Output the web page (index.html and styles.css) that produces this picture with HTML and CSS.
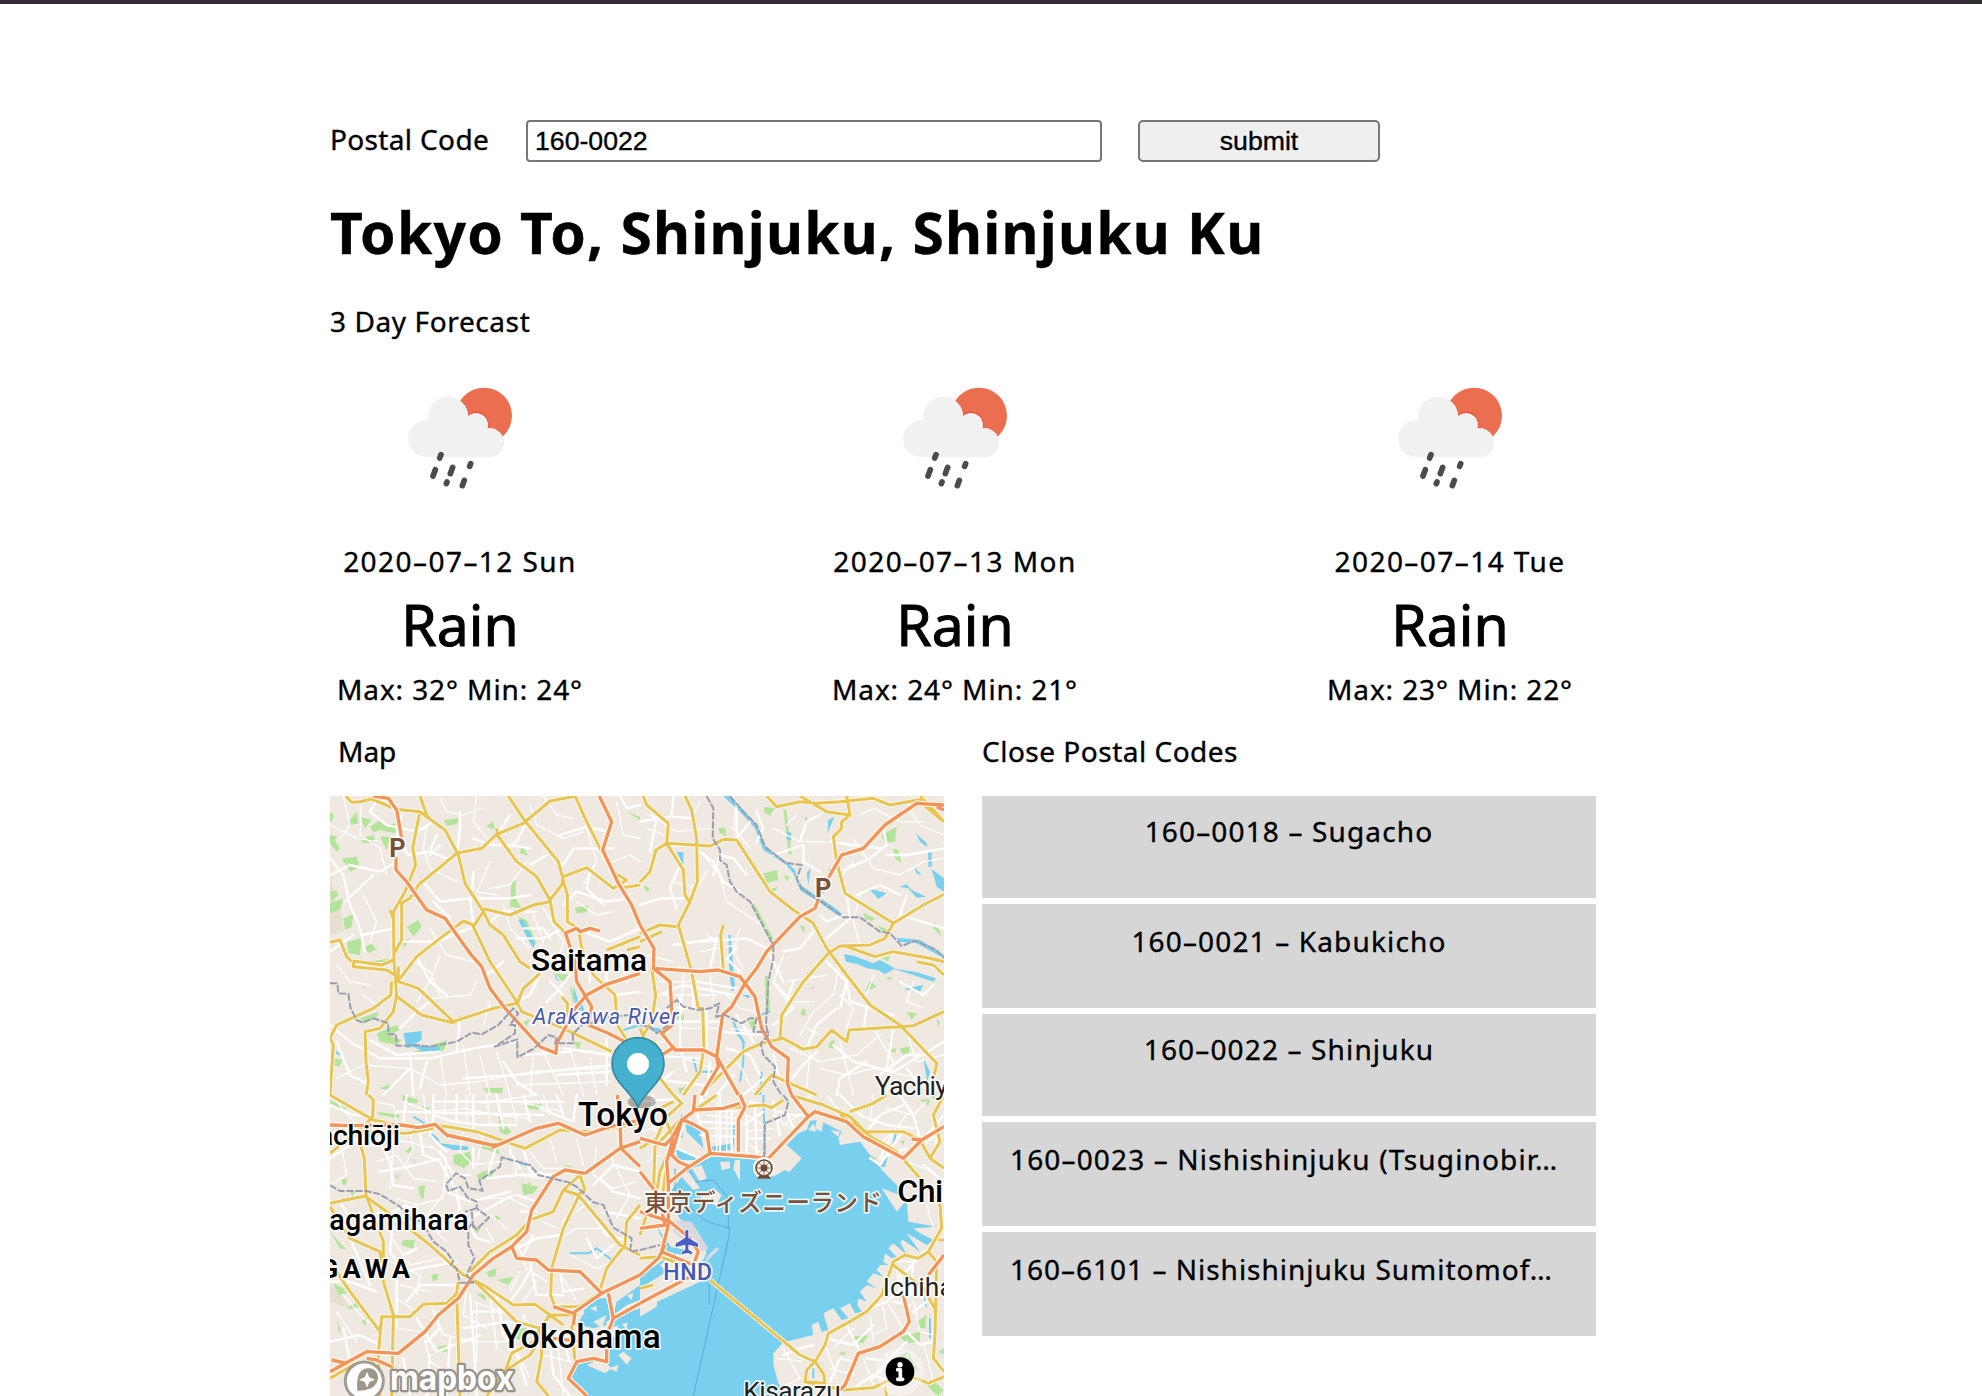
FILE: index.html
```html
<!DOCTYPE html>
<html lang="en">
<head>
<meta charset="utf-8">
<title>Postal Code Weather</title>
<link rel="stylesheet" href="styles.css">
</head>
<body>
<svg class="sprite" aria-hidden="true">
  <symbol id="rain" viewBox="261 51 318 306">
    <circle cx="492" cy="137" r="84" fill="#eb6e50"/>
    <g fill="#f04e30"><path d="M424 92Q446 112 446 140L436 150Z"/><circle cx="468" cy="163" r="38"/><path d="M470 190Q505 160 549 200Z"/></g>
    <g fill="#f1f1f1"><circle cx="385" cy="140" r="60"/><circle cx="319" cy="206" r="55"/><circle cx="468" cy="165" r="36"/><circle cx="508" cy="218" r="44"/><path d="M319 150H400L470 160L508 200V262H319Z"/></g>
    <path d="M363 254l-4 10M346 299l-7 19M398 292l-7 19M452 281l-3 8M381 336l-2 5M433 331l-6 16" stroke="#4b4b4b" stroke-width="17" stroke-linecap="round"/>
  </symbol>
</svg>
<main class="page">
  <form class="search">
    <label class="search-label" for="code">Postal Code</label>
    <input class="search-input" id="code" type="text" value="160-0022">
    <button class="search-button" type="button">submit</button>
  </form>
  <h1 class="place">Tokyo To, Shinjuku, Shinjuku Ku</h1>
  <p class="subtitle">3 Day Forecast</p>
  <section class="forecast">
    <article class="day">
      <svg class="day-icon"><use href="#rain"/></svg>
      <p class="day-date">2020–07–12 Sun</p>
      <p class="day-state">Rain</p>
      <p class="day-temp">Max: 32° Min: 24°</p>
    </article>
    <article class="day">
      <svg class="day-icon"><use href="#rain"/></svg>
      <p class="day-date">2020–07–13 Mon</p>
      <p class="day-state">Rain</p>
      <p class="day-temp">Max: 24° Min: 21°</p>
    </article>
    <article class="day">
      <svg class="day-icon"><use href="#rain"/></svg>
      <p class="day-date">2020–07–14 Tue</p>
      <p class="day-state">Rain</p>
      <p class="day-temp">Max: 23° Min: 22°</p>
    </article>
  </section>
  <div class="columns">
    <section>
      <h2 class="heading heading-map">Map</h2>
      <svg class="map" viewBox="0 3 1842 1800" preserveAspectRatio="none">
        <defs>
          <g id="trunk">
            <!-- north-west -->
            <path d="M48 3L65 22L90 20L125 12L200 43L270 50L345 105L385 180L405 265L460 350L480 390L520 420L570 500L600 520M270 3L290 60L302 75M268 58L248 160L257 210L225 290L190 350L192 500L200 600L190 650L150 700L105 710L108 800L115 860L108 900M180 345L192 375M535 3L585 78L685 200L697 245L712 300L712 380L745 400L755 460L790 540L855 600L862 690L890 735M240 310L265 270L380 175L455 160L500 118L580 85L660 18L740 3M500 100L502 120L560 200L620 245L660 315L672 380L705 412M660 315L695 270L700 245L770 218L850 280L890 255L845 230L770 80L735 3M660 320L610 330L540 360L465 342L430 395L480 500L560 620L575 650L700 700L845 770M430 390L400 378L330 430L260 485L210 550L170 525L70 515L72 498L155 510L190 495M0 442L30 435L50 485L65 500M185 560L182 600L130 640L20 690L0 730M205 515L205 560L265 580L370 680L490 640L562 625L580 580L630 535M195 600L275 660L375 685M240 310L215 325L215 435L190 480M0 730L10 750L0 900M830 465L930 425M890 465L930 455M870 280L930 270M695 605L712 625L715 690"/>
            <!-- north-east -->
            <g transform="translate(930 0)">
              <path d="M10 3L20 30L85 85L80 145L48 165L30 230L0 262M135 3L155 45L170 130L172 260L150 320L115 390L155 530L175 640L188 640L192 760L180 830L130 900M80 145L210 153L250 133L290 135L390 290L460 345L520 385L560 460L620 540L690 630L780 690L890 805L870 900M80 145L130 225L135 300L150 325M0 415L60 390L110 395M0 440L65 410M250 390L242 420L250 525M35 520L47 600L35 680L10 720M380 3L410 35L480 20L530 25L600 20L700 10L750 30L850 12M480 3L560 50L630 60L620 3M625 65L605 80L605 100L580 125L590 200L615 295L760 385L735 430L690 450L600 453L565 475L490 560L425 660L420 730M760 385L850 330L912 298M620 455L705 485L760 470L870 490L912 500M830 500L880 510L912 540M365 745L430 730L490 763L530 755L575 705L620 740L628 705L820 692L912 650M365 745L310 770L180 900M0 700L60 850L100 900M345 900L395 840L450 865L530 900M850 12L912 80M40 740L70 780M845 3V25L905 75"/>
            </g>
            <!-- south-west -->
            <g transform="translate(0 900)">
              <path d="M115 0L130 15L128 65L100 95L80 105L103 190L108 300L160 440L160 560L190 660L185 903M0 0L130 75L230 95L340 93L440 110L585 160L690 105L790 110L930 85M0 175L80 110L230 115L310 100M0 325L105 303L205 375L300 450L400 540L460 570L550 630L615 628L660 660L700 690M0 335L60 430L150 470L160 540M420 530L480 470L560 420L600 375L670 350L700 285L750 240L765 285L750 295L700 400L665 520L662 600L675 635L745 635L820 585M700 285L745 300L870 450L930 480M0 500L60 590L150 710L155 665L240 665L280 628L350 625L380 595L385 560M155 665L145 780L150 903M380 600L390 903M430 555L560 680L630 700L610 740L545 775L525 830L470 903M660 660L630 700L635 780L620 860L655 903M0 850L70 810L140 800M725 690L735 800M930 330L890 380L885 450L830 520L810 585M520 830L600 780L625 740M660 660L745 660"/>
            </g>
            <!-- south-east -->
            <g transform="translate(930 900)">
              <path d="M0 160L50 130L75 70L125 25L100 0M120 75L45 155L40 300L0 420M150 50L310 35L370 30L395 38L430 15M165 45L230 0M30 55L100 20M75 70L100 130L80 210L62 340M0 490L60 485L130 510M90 160L60 230L50 290M450 0L550 30L630 65L675 110L790 110L840 135L870 190L912 220M630 50L700 25L740 0M870 190L900 140L880 60L912 0M600 60L700 130L770 170L840 250L900 330L905 400L865 470L835 490L795 480L760 500L725 600L680 650L620 685L565 715L555 750L525 800M210 555L480 780L525 800L550 835L555 865L495 860L500 825L525 800M495 860L540 870L610 885L700 878L760 850L830 850L865 865L912 845M760 510L850 580L890 650M865 470L890 500L885 720L880 790L912 830M895 435H912M740 903L735 875M0 580L40 570"/>
            </g>
          </g>
          <g id="motorway">
            <path d="M130 3L175 10L200 45L215 130M198 185V225L230 260L290 345L345 370L370 405L420 475L455 515L480 580L525 640L630 755L678 775L680 745L710 690L735 640L770 600L830 568L930 535M705 415L740 400L750 410L780 400L810 408M705 410L735 500L740 560L785 635L775 690L835 715L885 740M808 3L845 80L818 165L865 265L905 330L930 390"/>
            <g transform="translate(930 0)">
              <path d="M0 390L42 460L40 520L180 530L235 525L300 545L315 565L345 605L365 700L395 755L445 790L442 865L455 900M40 520L90 560L98 690L65 715L105 765L190 765L230 785L295 900M105 755L65 780M315 565L350 520L380 470L480 365L525 340L540 300L570 240L605 180L670 160L735 90L830 25L912 30M315 565L275 635L248 660L230 785L235 815L185 900M890 35L912 45"/>
            </g>
            <g transform="translate(0 900)">
              <path d="M0 90L60 92L215 90L265 98L315 88L350 120L485 150L505 150L620 100L685 85L765 120L840 95L930 75M485 158L505 150M765 235L705 225L670 245L605 345L590 410L545 455L490 490L430 540L385 610L325 660L285 710L205 775L110 770L0 830M765 235L870 160L930 140M862 0L870 80L873 160L930 215M545 455L560 490L620 495L655 525L750 530L815 595L930 540M815 595L735 650L730 690M835 595L850 670L930 625M850 670L830 720L830 800L790 790L740 800L715 850L770 903M5 795L50 805M670 635L730 655M668 730L760 740M110 790L140 795L185 815"/>
            </g>
            <g transform="translate(930 900)">
              <path d="M165 0L160 50L125 75L95 130L75 150L0 130M300 0L315 35L295 75V170M300 25L250 40L160 45M130 75L155 85L200 110L210 175M125 75L95 180L115 200L150 215M455 0L505 65L385 190L340 185L210 175L140 220L85 265L80 200L100 130M505 65L525 50L620 80L670 125L790 190L845 135L912 95M815 132L845 135M85 265L85 390L65 470L160 510L175 470L150 430L90 380L0 350M0 400L75 390L55 300L0 230M0 540L55 490L75 450M0 625L160 540M912 480L865 540M790 600L808 680L790 710L720 755L655 775L615 870L600 885"/>
            </g>
          </g>
        </defs>
        <rect width="1842" height="1810" fill="#f0e9e1"/>
        <g fill="#e5dfd2"><path d="M0 220L15 320L35 360L40 410L0 420ZM0 1470L35 1500L60 1540L0 1520ZM300 300L325 290L320 302ZM90 580L105 572L108 585ZM1435 580L1455 570L1450 588ZM190 1140L215 1133L205 1160ZM240 1090L265 1095L250 1108Z"/></g>
        <g fill="#b4e39c">
          <path d="M60 75L80 50L85 85L60 90ZM90 65L125 75L105 100ZM120 95L150 75L160 90L200 85L195 115L150 105L130 112ZM150 125L180 125L170 165ZM35 190L80 185L90 215L60 230ZM0 120L20 125L15 135L30 160L20 170L0 145ZM90 130L130 120L135 142L100 145ZM340 75L385 70L380 88L350 92ZM470 95L490 78L495 105ZM575 150L595 182L570 175ZM545 255H557V310L575 340L540 335ZM230 395L265 375L275 395L250 425ZM215 445L240 430L225 455ZM50 440L95 430L90 480L55 475ZM105 455L125 447L140 462L115 475ZM0 290L20 285L25 300L5 320ZM0 325L40 310L30 345L0 355ZM40 370L70 358L65 395L45 405ZM735 340L775 330L770 352L740 355ZM565 365L590 375L620 445L605 450ZM670 535L720 540L700 560ZM720 570L735 600L730 630ZM730 740L755 742L745 765ZM580 680L600 672L590 695ZM90 670L145 650L140 670L100 685ZM140 715L200 690L210 705L175 720L215 735L200 750L150 740ZM250 770L350 735L345 760L330 775ZM12 790L38 795L28 815L10 810ZM150 880L180 868L175 885ZM460 880L520 878L515 895L470 892ZM890 50L930 65V75ZM120 500L180 490L165 512ZM385 665L412 658L405 668ZM660 828L690 822L680 832ZM0 50L12 60L5 80L0 78Z"/>
          <path transform="translate(930 0)" d="M235 100L255 98L260 125L240 115ZM370 35L405 40L390 62L375 55ZM430 40L440 50L455 180L445 175ZM495 65L510 75L495 90ZM725 120L770 95L765 140L735 145ZM760 160L775 165L785 205L765 190ZM335 190L355 220L345 225ZM370 235L410 225L415 255L380 265ZM380 285L415 275L400 292ZM430 240L450 245L440 258ZM480 285L520 300L530 315L500 300ZM670 355L705 370L695 378L675 372ZM710 390L745 405L730 412ZM480 390L495 395L490 415ZM885 380L900 410L905 425L880 400ZM330 320L345 330L400 430L390 440ZM375 540L385 545L390 650L378 660ZM725 490L750 482L745 500ZM675 590L690 555L710 575ZM735 548L758 545L750 555ZM485 645L495 640L498 662L482 660ZM570 740L585 735L580 762L565 755ZM800 650L830 655L815 675ZM745 735L760 730L755 748ZM745 765L770 760L765 775ZM780 760L810 755L805 780L785 775ZM110 660L132 658L130 685L112 683ZM325 680L350 670L340 710ZM115 880L135 875L120 898ZM890 670L900 680L895 700ZM10 270L30 280L20 292Z"/>
          <path transform="translate(0 900)" d="M215 0L265 15L260 25L220 20ZM505 60L525 90L545 110L530 120L510 112ZM580 30L635 28L630 45L590 40ZM140 50L210 60L205 70L150 60ZM225 170L250 150L240 175ZM265 275L285 270L280 315L268 300ZM370 180L420 170L425 200L400 220L370 205ZM440 155L500 150L510 180L490 170ZM440 240L470 225L495 225L480 250L445 255ZM575 265L625 275L610 295L580 300ZM590 268L600 262L605 275ZM495 360L512 368L500 382ZM430 400L455 400L440 415ZM220 435L255 435L250 462L215 450ZM470 530L500 520L495 545L475 545ZM500 555L550 545L535 570ZM305 540L325 535L322 555L308 558ZM440 595L465 600L465 618ZM50 640L85 618L95 635L60 642ZM20 670L35 720L25 705ZM95 680L110 665L108 695ZM325 755L350 750L352 770L322 770ZM0 410L50 465L30 460ZM550 705L600 695L570 735L555 730ZM780 330L795 335L800 340ZM10 565L40 580L50 595L25 600ZM60 290L75 290L68 305ZM0 15L50 40L40 45L0 25ZM270 32L300 38L295 45ZM700 210L725 212L720 218ZM35 255L52 250L48 270L38 268Z"/>
          <path transform="translate(930 900)" d="M780 140L795 135L790 150ZM840 15L870 12L865 32ZM690 180L710 190L700 205ZM830 680L860 660L855 700L835 698ZM780 725L840 710L840 740L800 745ZM640 725L685 720L670 745L645 740ZM595 775L620 768L610 782ZM860 870L885 860L910 885L895 903L880 890ZM800 770L840 830L770 790ZM870 5L890 0V15ZM895 770L912 760V780Z"/>
        </g>
        <!-- bay, harbours, lakes -->
        <g fill="#78cfee">
          <path transform="translate(930 900)" d="M-155 903L-210 860L-195 800L-150 790L-105 800L-95 760L-85 740L-60 680L-40 705L-35 660L0 665L50 635L52 620L180 560L205 545L195 505L165 510L235 465L232 455L190 495L200 470L160 400L120 372L100 335L95 285L140 225L215 185L290 182L350 195L400 245L435 225L448 232L485 190L440 150L475 115L500 105L510 78L530 75L525 100L545 110L550 82L605 110L595 130L600 150L660 140L690 180L730 230L770 270L800 310L805 380L890 395L820 400L840 415L880 435L860 450L800 415L840 470L790 435L780 440L800 480L760 445L745 460L770 485L755 490L735 475L730 500L745 510L720 510L710 525L730 545L700 535L680 560L710 580L680 570L660 590L680 620L655 610L652 630L665 650L645 655L630 625L600 640L625 670L605 675L580 640L550 655L565 705L545 710L535 680L515 690L520 720L430 742L400 775V810L415 865L440 903Z"/>
          <path d="M740 1590L790 1510L835 1510L850 1570L790 1600L750 1590ZM850 1560L860 1520L930 1470V1515L890 1530ZM835 1600L870 1590L930 1570V1540L850 1565ZM760 1545L815 1520L830 1590L790 1600Z"/>
          <path d="M220 715L275 708V735L250 750L330 755V772L280 770L250 755L230 760ZM565 375L580 375L615 445L610 460L595 435ZM730 570L745 620L735 625ZM670 535L690 560L680 555ZM15 765L38 782L20 778ZM300 1010L325 1030L330 1045L375 1050L415 1055V1065H370L325 1048L305 1030ZM515 1085L600 1108L595 1115L520 1090ZM610 1120L640 1142L625 1143ZM755 625L765 650L745 645Z"/>
          <path transform="translate(930 0)" d="M250 3H270L310 45L350 90L375 155L440 200L465 225L475 265L525 300L580 335L610 360L600 365L535 320L480 285L460 235L435 205L370 165L345 100L300 50ZM440 112H453V138L440 130ZM500 235L512 218L505 270ZM828 115L860 145V155L840 140ZM865 170L875 175V215H865ZM875 222L912 250V290L890 275ZM685 280L740 295L715 312ZM778 275L800 268L815 285L858 305L830 308L805 280ZM825 218L845 240L828 235ZM612 478L640 482L700 505L720 495L765 520L735 538L715 525L680 520L655 508L618 500ZM755 520L830 532L888 550L880 560L820 540ZM790 582L850 570L840 590ZM770 428L840 435L912 480V490L830 445L775 440ZM110 170L130 172V210ZM565 75L583 65L562 115ZM265 420H272L285 580L275 590L268 530ZM305 600L330 600L325 610ZM850 790L870 830L862 860ZM280 680L320 750L290 720ZM10 695L60 700L55 715Z"/>
          <path transform="translate(930 900)" d="M105 155L200 195L115 195ZM135 80L180 95L190 160L140 110ZM215 155L280 145V165L220 170ZM270 90L285 92L282 150L275 145ZM50 395L110 480L80 460ZM0 530L60 510L80 530L0 580ZM720 215L745 180L735 215ZM60 450L140 465L130 480L70 468ZM850 580L862 640L855 630Z"/>
        </g>
        <g fill="none" stroke="#78cfee" stroke-width="6">
          <path d="M720 1375H775L800 1360L845 1395M250 965L275 980L290 990M880 705L930 690M1010 785L1090 790L1100 830L1160 830M1210 680L1240 745V800L1230 860M1295 830L1290 900M1300 900L1305 1080M1230 1000L1230 1070M1500 220L1495 270M1700 1000L1690 1050M1450 1720V1750M1800 1570V1630M1320 650L1290 660M1055 960V1030M1025 1380L930 1450"/>
        </g>
        <path fill="#d9d7e0" d="M1030 1275L1085 1280L1135 1360L1110 1375L1030 1310ZM1125 1395L1165 1355V1365L1130 1400Z"/>
        <g fill="#f0e9e1">
          <path d="M1050 1140L1075 1130L1110 1180L1090 1185ZM1085 1120L1115 1110L1130 1150L1110 1160ZM1110 1200L1150 1180L1175 1200L1160 1230L1120 1225ZM1170 1100H1200V1120L1175 1125ZM1215 1095H1230V1160L1210 1120ZM1435 1005L1450 985L1460 1010ZM1500 1005L1530 1010L1525 1025ZM1735 1240L1765 1235L1770 1270L1810 1265L1810 1280H1740ZM1655 1180L1735 1210L1700 1250Z"/>
          <path d="M780 1540L800 1533V1550ZM790 1580L830 1560L815 1600ZM865 1680L880 1670L905 1690L890 1710ZM835 1720L865 1710L860 1730ZM770 1710L815 1690L845 1720L825 1735ZM890 1500L910 1495L905 1515Z"/>
        </g>
        <g fill="none" stroke="#5ba9dc" stroke-width="3"><path d="M1035 1120V1200L1130 1280L1198 1300V1320L1090 1803M1095 1160L1150 1155L1195 1210V1300M1138 1460V1530"/></g>
        <!-- local streets -->
        <g class="street-fine">
          <path d="M0 90L80 130L150 140M40 3L60 90L30 130M95 20L90 120L150 160L170 240M290 90L280 160L300 220L380 260M330 10L350 50L400 60L450 40M440 3L430 80L470 130M600 30L620 90L700 130L760 110M640 3L680 60L730 70M300 400L350 480L430 500M100 300L140 380L120 440M250 500L300 530L330 600M330 480L300 560L260 620M520 330L540 400L600 460M610 360L640 440L600 500M740 320L800 360L850 350M770 100L800 200L760 270M860 20L880 120L930 130M850 200L900 180L930 200M480 200L440 290L500 300M590 200L540 270L480 280M640 340L700 440L680 520M20 510L60 560L120 570M100 600L140 630M300 610L420 600L440 560M460 690L480 620M20 850L100 810L240 820L330 870L440 860L560 840M330 780L350 900M400 750L420 900M450 780L480 900M500 770L540 900M610 790L600 900M640 770L700 900M720 760L760 900M780 790L800 900M600 830L830 820M560 870L840 860"/>
          <path transform="translate(930 0)" d="M20 100L70 120M30 60L110 110L210 100M180 20L160 60M190 180L240 240L260 320L380 400M100 260L170 280L200 230M290 20L280 100L330 160M400 100L480 140L560 140M470 60L440 90M660 60L700 40L780 80L850 80M640 130L700 220L780 240L850 200L912 190M640 200L600 250M800 30L840 90L912 120M660 300L640 380L660 450M430 480L400 560L460 620L520 620M600 500L580 600L520 650L480 720M700 540L680 600M820 560L800 620L850 640M600 600L640 640L620 700M440 560L560 540M500 700L540 720M20 480L100 500M60 560L150 560M70 600L230 600M130 540L125 650M210 540L220 620M50 640L90 660M120 700L230 700M30 740L100 740M130 790L250 830M260 600L300 640L350 650M270 700L350 710M260 790L300 810L340 890M450 760L540 800L650 780L720 720M510 770L500 880M600 740L640 900M700 700L760 800L740 900M800 710L830 800L912 780M540 820L620 840L700 820L840 850M300 400L280 470L310 520M200 420L240 440M180 470L290 450"/>
          <path transform="translate(0 900)" d="M20 20L80 90M30 130L50 240L0 270M150 130L230 140L310 160M140 200L200 180L250 250L320 260M190 160L180 280M240 110L250 160L220 220M300 150L350 190L340 300L290 360M400 110L390 170L430 210L510 200M460 110L440 210M540 150L560 240L640 250M600 170L640 220L700 220M200 310L260 330L340 310M210 400L300 390L350 440M100 360L180 350M450 310L540 310L600 340M480 360L530 400M490 440L470 400M20 370L90 420M180 420L240 510L330 490L380 520M180 500L270 540L260 600M210 570L300 590M60 480L130 510M40 600L110 680L150 680M20 650L80 740M200 610L260 650M310 640L340 720L440 740L540 740M410 580L400 660L470 700M430 620L540 660M280 720L300 800L380 850M210 700L270 710M440 620V800M480 600L500 760M560 440L590 520L650 560M570 530L540 590M620 560L580 620M700 550L740 620M720 480L800 520L850 500M690 430L740 400L820 400M780 320L740 350M640 380L680 400M800 150L790 240L850 280L920 260M840 180L900 300L860 370M740 130L760 210M660 130L680 200M560 770L600 850M680 720L700 900M640 780L720 800M220 20L300 50L400 40L500 60L600 70M280 0L290 80M350 0L340 60M410 0V80M470 0L480 90M540 0L560 80M640 0L660 60M560 20L700 50M200 80L190 30L130 20M450 25L620 0"/>
          <path transform="translate(930 900)" d="M0 60L60 50M10 110L60 90M20 200L60 180M180 10L175 100L220 140M200 60L290 70M200 100L290 100M230 20V170M260 30V170M320 60L370 90M320 110L400 100M330 150L360 170M400 60L450 100M430 90L480 60M480 20L520 0M560 0L600 50M700 0L690 80M740 40L820 60L860 20M700 160L760 110L800 60M730 150L800 200L850 220M850 150L890 120L880 200M830 280L890 290M770 520L780 600L870 600M720 590L740 700L700 720M580 760L640 700M570 820L640 840M690 660L700 740M590 850L560 760M740 620L790 700M820 620L840 710L880 720M430 760L480 850L440 870M410 790L490 800M670 790L700 870M800 780L820 860M740 780L790 850M850 740L880 860M860 330L880 400"/>
        </g>
        <g class="street">
          <path d="M0 190L40 240L60 330L90 400L105 470M0 240L60 210L150 230L200 200M150 3L120 50L170 90L260 110L310 80M215 60L200 130L235 180L300 170M100 420L190 400M45 320L130 240M320 120L300 170L350 190M390 50V100L380 180M330 150L300 180M430 130L480 150L540 150L600 160M280 260L330 320L420 310L430 390M430 230L425 310L540 310L600 300M310 320L360 370M540 60L500 120M590 80L560 140L530 160M650 180L600 210M700 210L730 160L850 160M700 330L740 290L830 320L900 310M780 230L770 280L820 330M760 410L840 440L930 400M690 120L770 95L830 110M870 3L890 40L930 30M0 470L70 420M210 440L320 440L420 400M260 485L300 560L350 600M480 380L520 350L620 350M560 430L640 430L700 400M580 400L640 400L660 430M520 500L470 540M640 520L600 600L560 620M720 540L680 590L650 620M770 480L780 560M830 480L830 560M660 560L700 600M870 480L890 560M860 600L930 590M0 690L60 740L150 790L300 790L430 760L560 740M120 735L200 780L330 770M20 740L60 840L120 870M240 820L160 900M210 700L260 650L300 620M390 670L380 770M400 850L550 840L650 830L840 810M520 800L560 860L620 900M680 840L840 830M580 780L720 770M700 760L840 780M240 780L250 900M290 800L270 880M830 730V870"/>
          <path transform="translate(930 0)" d="M0 80L90 65L160 70M20 30L50 70L30 170M100 3L95 60M220 240L240 180L280 190L320 240M180 170L220 200L250 260L300 290M120 210L90 280L110 340M0 330L60 310L130 310M350 50L370 100L350 140M330 80L290 130L290 40M400 180L490 150L490 200L540 230M480 140L500 80L540 60M570 140L640 150L720 160M600 230L690 190L740 150L730 100M620 300L630 370L560 430M740 180L800 180L912 160M650 300L720 270L780 300M800 300L780 360L912 400M540 360L560 380L610 360M430 470L480 460L520 410M380 460L320 430L180 440M100 450L230 430L210 520M290 460L260 490L300 530M170 560L290 580M60 600L130 570L280 600M400 560L460 640L400 690M390 480L430 560M560 500L620 560L600 640M620 560L630 620L760 660M780 560L850 600L880 570M590 640L530 690L500 760M680 640L670 700M760 700L740 820M580 750L640 800L760 830L912 740M720 840L800 780L860 780M530 770L480 820L450 860M680 800L600 850L590 900M800 820L830 860M120 600V760M160 540V640M80 640L180 640M110 680L240 680M0 780L180 790M20 850L190 870M240 710L360 720M290 660L340 740M260 760L330 780L360 840M370 850L310 900M140 830L120 760M210 800L200 900M280 840L230 900M400 780L420 860M200 640V760M100 830L60 860M460 560L440 620"/>
          <path transform="translate(0 900)" d="M0 30L70 60L120 60M50 100L60 150L0 190M60 130L130 150M145 130L180 200L190 270L250 280M150 230L260 210L330 190M330 170L370 240L420 240M270 110L280 180L330 200L380 290M310 60L300 120L350 170M350 290L420 320L540 290M350 380L420 370L550 300M330 410L350 380M430 160V220M500 150L470 250L560 240L650 240M540 170L570 220M580 160L600 230L670 240M190 370L180 470L220 530L380 500M60 370L30 320M130 380L230 330L280 370M220 480L260 460M480 440L440 430L410 380M380 300L390 340L350 390M570 350L620 350M610 420L580 480M560 300L620 320M600 530L570 580L540 620M600 500L620 600L700 600M690 530L700 590L760 580M690 420L620 430L560 460M740 330L700 380M760 320L830 420L900 440M810 250L850 290L930 310M790 270L850 210L930 230M770 430L800 490L850 450M820 350L930 370M0 560L60 560L140 590M60 430L120 570M200 500V700M230 620L270 570L380 570M310 650L330 700L290 740M260 670L320 770L450 720M420 600L430 730L440 903M430 650L530 650M400 700L530 680L570 690M500 590L520 720L550 760M580 660L600 720M600 760L700 740L720 800M640 700L720 730M560 780L590 870M660 740L670 840L720 903M0 740L90 720L150 750M40 700L60 800M220 790L240 900M300 780L290 903M360 730L350 900M230 0L220 80M310 0V60L370 80L450 90L560 90M380 0V80M430 0V100M500 0L520 100M580 0L600 80M630 40L730 80M680 0L700 60M310 20L700 20M200 50L420 55L640 60M740 0L730 80"/>
          <path transform="translate(930 900)" d="M40 0L30 80L60 130M0 20L120 10M180 0L200 40L290 50M180 80L290 85M180 120L290 125M240 0V170M275 30V170M320 60V180M345 40L350 180M370 50L310 90M320 130L390 130M400 20L420 120M330 20L450 60L500 60M460 100L440 50M170 60L210 150M130 90L110 160L180 190M600 0L660 60L740 90L820 100M680 110L720 60L790 30M780 0L820 60L840 130M760 110L720 190L800 160M690 190L720 210L780 120M860 120L912 60M850 210L912 260M780 540L790 580L740 620L690 640M820 500L810 600M850 470L790 540M760 500L820 500M760 620L810 630M620 690L660 770M560 730L640 750L700 690M520 800L470 780M430 780L480 760L520 750M640 800L600 790L570 860M860 620L820 650M800 710L840 750L880 740M800 740L740 800L700 850M680 790L820 810M640 880L700 840L780 870"/>
        </g>
        <use href="#trunk" class="casing"/>
        <use href="#trunk" class="trunk"/>
        <use href="#motorway" class="casing casing-wide"/>
        <use href="#motorway" class="motorway"/>
        <g class="border-line">
          <path d="M0 565H22L25 595L55 597L62 640L80 675L98 683L130 670L175 685V718L198 718L200 752H222L255 750L300 755L380 740L425 713L455 718L505 690L550 640L565 655L540 690L555 690V715L495 755L562 733V787L610 762L655 720L680 728L675 745H690L730 745L728 718L755 690L800 680L840 665L900 660L930 665"/>
          <path transform="translate(930 0)" d="M200 3L220 40L218 130L240 165V195L260 210L270 260L290 290L330 320L400 450V490L385 560L378 690L385 720L362 745L370 780L405 815L400 860L425 900M270 3L310 50L350 90L375 155L435 203L485 210L470 250L485 280L530 310L610 367H660L720 410L750 415L785 453L825 437L890 465L912 490M0 690L30 695L50 715L85 690M80 640L110 615L130 635L175 645L210 640L238 625L228 665L255 660L305 685L330 670H350L340 710L388 712"/>
          <g transform="translate(0 900)"><path d="M0 270L30 288H110L150 298L210 335L240 370L275 380L310 440L350 470L370 500L362 510L380 520L390 563H430L410 540L433 490L415 450V400L425 385L440 403L477 368L440 340V320L415 310L390 275L355 288L348 268L378 235L405 250L415 280L458 287L448 257L510 215L515 187L600 210L625 240L715 262L740 275L790 322L820 330L850 398L905 430L900 470L930 465M440 340L405 350M425 350L430 400"/></g>
          <path transform="translate(930 900)" d="M430 0L445 20L435 60L375 85L372 190M0 465L60 450"/>
        </g>
        <g class="labels">
          <g class="poi"><text x="178" y="187" font-size="76" font-weight="700">P</text><text x="1455" y="305" font-size="76" font-weight="700">P</text>
            <text class="cjk" x="942" y="1247" font-size="71" textLength="714">東京ディズニーランド</text></g>
          <text x="603" y="528" font-size="95" textLength="348">Saitama</text>
          <g class="blue"><text x="608" y="687" font-size="65" font-style="italic" font-weight="400" textLength="437">Arakawa River</text></g>
          <g class="light"><text x="1634" y="899" font-size="80" textLength="262">Yachiyo</text><text x="1658" y="1502" font-size="79" textLength="282">Ichihara</text><text x="1240" y="1814" font-size="79" textLength="292">Kisarazu</text></g>
          <text x="744" y="993" font-size="100" textLength="270">Tokyo</text>
          <text x="210" y="1050" font-size="85" text-anchor="end" textLength="306">Hachiōji</text>
          <text x="416" y="1306" font-size="86" text-anchor="end" textLength="472">Sagamihara</text>
          <text x="-300" y="1448" font-size="80" font-weight="700" textLength="540">KANAGAWA</text>
          <text x="514" y="1660" font-size="100" textLength="478">Yokohama</text>
          <text x="1702" y="1220" font-size="96" textLength="240">Chiba</text>
          <g class="blue"><text x="1000" y="1456" font-size="69" textLength="146">HND</text></g>
        </g>
        <path fill="#4a5cc8" stroke="#fff" stroke-width="4" paint-order="stroke" d="M1066 1308q4-8 9 0v20l29 18v10l-29-7v15l11 8v6l-15-4-15 4v-6l10-8v-15l-29 7v-10l29-18z"/>
        <g fill="none" stroke="#704b36" stroke-width="5"><circle cx="1302" cy="1119" r="27" fill="#f0e9e1" stroke="#fff" stroke-width="12"/><circle cx="1302" cy="1119" r="24"/><circle cx="1302" cy="1119" r="8" fill="#704b36"/><path d="M1302 1095V1143M1278 1119H1326M1285 1102L1319 1136M1319 1102L1285 1136" stroke-width="2"/><path d="M1290 1143L1286 1149H1318L1314 1143" fill="#704b36"/></g>
        <ellipse cx="935" cy="920" rx="42" ry="20" fill="#000" opacity=".28"/>
        <path d="M924 936C905 890 846 860 846 806A78 78 0 0 1 1002 806C1002 860 943 890 924 936Z" fill="#46b1cf" stroke="#328aa5" stroke-width="5"/>
        <circle cx="924" cy="807" r="33" fill="#fff"/>
        <g><circle cx="103" cy="1758" r="57" fill="#fff" stroke="#8b8780" stroke-opacity=".8" stroke-width="9"/><path d="M82 1787C78 1740 90 1718 120 1720C148 1724 152 1760 130 1775C118 1784 98 1787 82 1787Z" fill="#9d9689"/><path d="M111 1730l7 17 17 7-17 7-7 17-7-17-17-7 17-7z" fill="#fff"/>
          <text x="180" y="1786" class="logo" font-size="101" textLength="372" lengthAdjust="spacingAndGlyphs">mapbox</text></g>
        <circle cx="1710" cy="1730" r="72" fill="#fff" opacity=".35"/><circle cx="1710" cy="1730" r="43" fill="#000"/><circle cx="1710" cy="1709" r="8" fill="#fff"/><path d="M1703 1724H1711V1753M1703 1753H1718" stroke="#fff" stroke-width="11" fill="none" stroke-linecap="round" stroke-linejoin="round"/>
      </svg>
    </section>
    <section>
      <h2 class="heading heading-codes">Close Postal Codes</h2>
      <ul class="codes">
        <li class="code">160–0018 – Sugacho</li>
        <li class="code">160–0021 – Kabukicho</li>
        <li class="code">160–0022 – Shinjuku</li>
        <li class="code code-long">160–0023 – Nishishinjuku (Tsuginobir…</li>
        <li class="code code-long">160–6101 – Nishishinjuku Sumitomof…</li>
      </ul>
    </section>
  </div>
</main>
</body>
</html>
```
FILE: styles.css
```css
* { box-sizing: border-box; }
html { background: #fff; }
body {
  margin: 0;
  height: 1396px;
  overflow: hidden;
  border-top: 4px solid #302e34;
  color: #000;
  font: 28px/40px "Noto Sans", "Open Sans", sans-serif;
}
h1, h2, p, ul { margin: 0; padding: 0; }
.sprite { display: none; }
.page { width: 1266px; margin-left: 330px; padding-top: 116px; -webkit-text-stroke: .35px #000; }
.search { display: flex; height: 42px; }
.search-label { width: 196px; line-height: 38px; letter-spacing: .35px; }
.search-input,
.search-button {
  height: 42px;
  border: 2px solid #767676;
  color: #000;
  font: 26.67px "Liberation Sans", Arial, sans-serif;
}
.search-input { width: 576px; padding: 0 7px; border-radius: 4px; background: #fff; outline: none; }
.search-button { width: 242px; margin-left: 36px; padding: 0; border-radius: 5px; background: #efefef; }
.place { margin-top: 30px; font-size: 57px; line-height: 80px; font-weight: 700; letter-spacing: 1.2px; white-space: nowrap; }
.subtitle { margin-top: 29px; letter-spacing: .6px; }
.forecast { display: flex; justify-content: space-between; width: 1250px; margin-top: 46px; }
.day { display: flex; flex-direction: column; align-items: center; width: 260px; white-space: nowrap; }
.day-icon { width: 106px; height: 102px; }
.day-date { margin-top: 52px; letter-spacing: 1.45px; }
.day-state { margin-top: 3px; font-size: 57px; line-height: 80px; -webkit-text-stroke-width: 1px; }
.day-temp { margin-top: 5px; letter-spacing: .9px; }
.columns { display: grid; grid-template-columns: 614px 614px; column-gap: 38px; margin-top: 22px; }
.heading { font-size: 28px; line-height: 40px; font-weight: 400; }
.heading-map { padding-left: 8px; }
.heading-codes { letter-spacing: .5px; }
.map { display: block; width: 614px; height: 600px; margin-top: 25px; overflow: hidden; -webkit-text-stroke: 0; }
.codes { display: grid; grid-template-rows: 102px 104px 102px 104px 104px; row-gap: 6px; margin-top: 25px; list-style: none; }
.code { padding: 17px 28px 0; background: #d6d6d6; text-align: center; letter-spacing: 1.15px; white-space: nowrap; overflow: hidden; }
.code:nth-child(1), .code:nth-child(3) { padding-top: 15px; }
.code-long { text-align: left; }
.code-long:last-child { letter-spacing: 1px; }

.street, .street-fine, .casing, .trunk, .motorway, .border-line { fill: none; stroke-linejoin: round; }
.street, .street-fine { stroke-linecap: round; }
.street { stroke: #fff; stroke-width: 7; }
.street-fine { stroke: #fff; stroke-width: 4; }
.casing { stroke: #fffaf0; stroke-width: 14; }
.casing-wide { stroke-width: 17; }
.trunk { stroke: #e8c452; stroke-width: 9; }
.motorway { stroke: #f3935a; stroke-width: 10; }
.border-line { stroke: #9a9eaf; stroke-width: 6; stroke-dasharray: 22 5; }
.labels { font-family: Roboto, "Noto Sans", sans-serif; font-weight: 500; fill: #000; }
.labels text { paint-order: stroke; stroke: #fff; stroke-opacity: .85; stroke-width: 10; stroke-linejoin: round; }
.labels .light { font-weight: 400; fill: #222; }
.labels .blue { fill: #4658b0; }
.labels .poi { fill: #76523d; }
.labels .cjk { font-family: "Noto Sans CJK JP", sans-serif; }
.logo { font-family: Inter, sans-serif; font-weight: 700; fill: #fff; stroke: #96928a; stroke-width: 14; stroke-linejoin: round; paint-order: stroke; }
```
